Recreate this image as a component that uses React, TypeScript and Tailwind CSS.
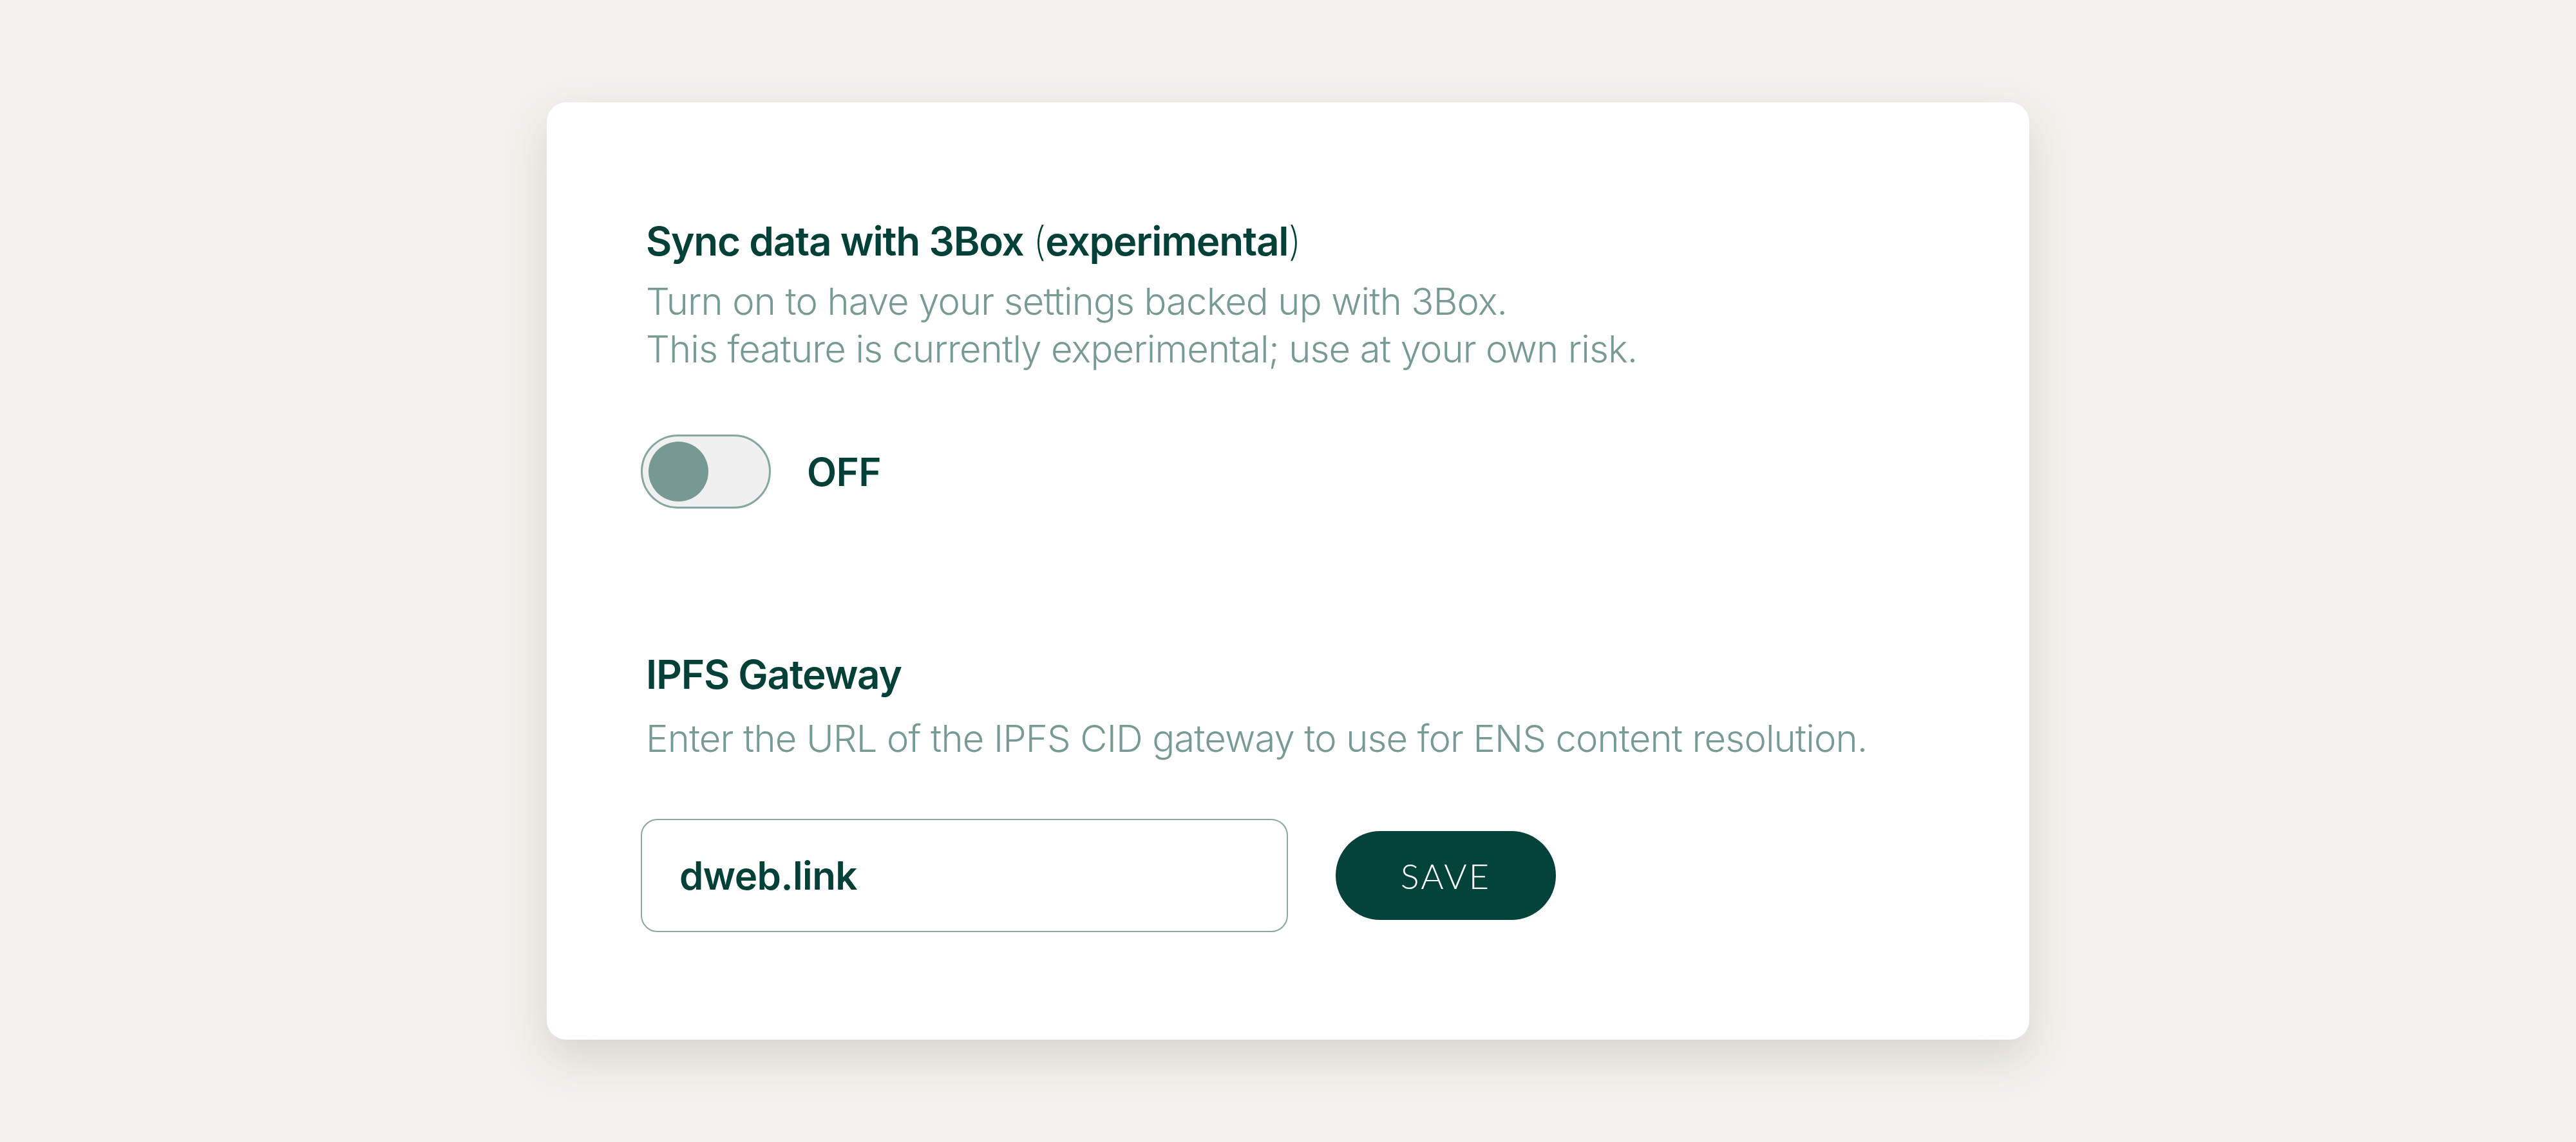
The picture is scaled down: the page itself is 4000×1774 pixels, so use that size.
import React from "react";

export default function App() {
  return (
    <div className="w-full h-[1774px] bg-[#f3f2ee] flex items-center justify-center font-['Inter',sans-serif]">
      <div className="w-[2302px] h-[1456px] bg-white rounded-[30px] shadow-[0_28px_70px_rgba(70,70,50,0.18)] pl-[154px] pt-[176px] flex flex-col">
        <h2 className="text-[62px] leading-[80px] font-semibold text-[#024038] tracking-[-0.02em]">
          Sync data with 3Box <span className="font-extralight">(</span>experimental<span className="font-extralight">)</span>
        </h2>
        <p className="mt-[16px] text-[58px] leading-[74px] font-light text-[#789a95] tracking-[-0.015em]">
          Turn on to have your settings backed up with 3Box.
          <br />
          This feature is currently experimental; use at your own risk.
        </p>
        <div className="mt-[96px] flex items-center gap-[56px] -ml-[8px]">
          <div className="w-[202px] h-[115px] rounded-full border-[3px] border-[#86a6a1] bg-[#f0f0f0] flex items-center pl-[9px]">
            <div className="w-[93px] h-[93px] rounded-full bg-[#779994]" />
          </div>
          <span className="text-[60px] font-semibold text-[#024038] tracking-[-0.01em]">OFF</span>
        </div>
        <h2 className="mt-[218px] text-[62px] leading-[80px] font-semibold text-[#024038] tracking-[-0.02em]">
          IPFS Gateway
        </h2>
        <p className="mt-[22px] text-[58px] leading-[74px] font-light text-[#789a95] tracking-[-0.015em]">
          Enter the URL of the IPFS CID gateway to use for ENS content resolution.
        </p>
        <div className="mt-[88px] flex items-center gap-[74px] -ml-[8px]">
          <div className="w-[1005px] h-[176px] rounded-[26px] border-2 border-[#8aa8a3] flex items-center pl-[58px]">
            <span className="text-[60px] font-semibold text-[#024038] tracking-[-0.01em]">dweb.link</span>
          </div>
          <button className="w-[342px] h-[138px] rounded-full bg-[#03433a] text-white text-[54px] font-light tracking-[0.06em] font-['Lato',sans-serif]">
            SAVE
          </button>
        </div>
      </div>
    </div>
  );
}
